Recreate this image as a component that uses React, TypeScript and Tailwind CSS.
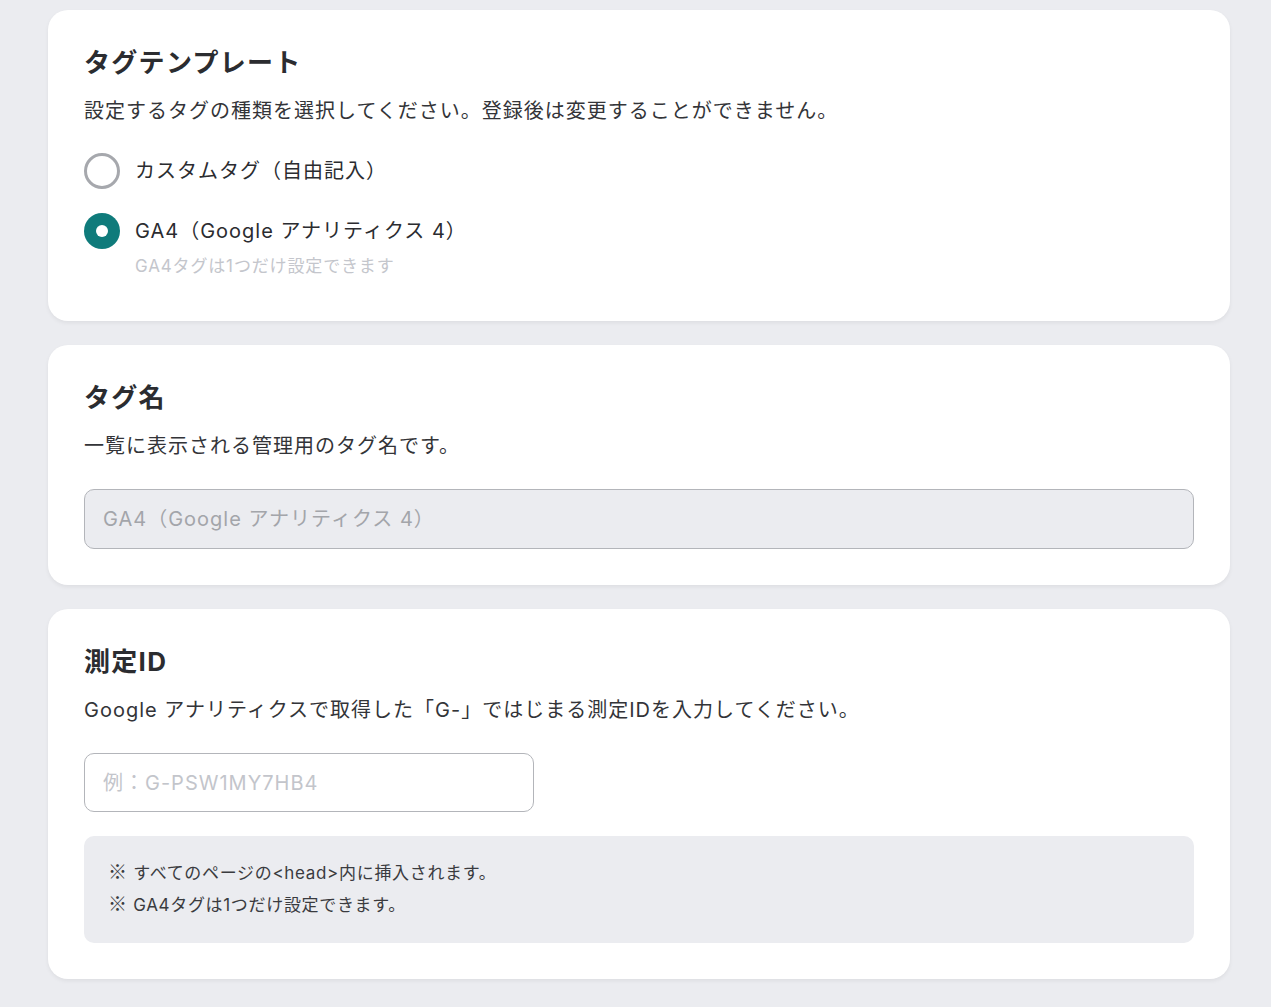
import React, { useState } from 'react';

const font = { fontFamily: 'Inter, "Noto Sans CJK JP", sans-serif' };
const cjk = { fontFamily: '"Noto Sans CJK JP", sans-serif' };

const Card: React.FC<{ className?: string; children: React.ReactNode }> = ({ className = '', children }) => (
  <section className={`bg-white rounded-[20px] px-9 pt-9 shadow-[0_2px_4px_rgba(0,0,0,0.06)] ${className}`}>
    {children}
  </section>
);

const Title: React.FC<{ children: React.ReactNode }> = ({ children }) => (
  <h2 className="text-[26px] leading-[34px] font-bold tracking-[0.05em] text-[#2b2c30]">{children}</h2>
);

const Desc: React.FC<{ children: React.ReactNode }> = ({ children }) => (
  <p className="mt-4 text-[20px] leading-[30px] tracking-[0.05em] text-[#333438]">{children}</p>
);

const Radio: React.FC<{ checked: boolean; onClick: () => void; label: string }> = ({ checked, onClick, label }) => (
  <button type="button" onClick={onClick} className="flex items-center gap-[15px] text-left">
    {checked ? (
      <span className="w-9 h-9 rounded-full bg-[#0f7b7b] flex items-center justify-center">
        <span className="w-3 h-3 rounded-full bg-white" />
      </span>
    ) : (
      <span className="w-9 h-9 rounded-full border-[3px] border-[#a6a8ad] bg-white" />
    )}
    <span className="text-[20px] leading-[30px] tracking-[0.05em] text-[#2b2c30]">{label}</span>
  </button>
);

export default function App() {
  const [template, setTemplate] = useState<'custom' | 'ga4'>('ga4');
  const [measureId, setMeasureId] = useState('');

  return (
    <div className="min-h-screen bg-[#ebecf0] pl-12 pr-[41px] pt-[10px] pb-7 flex flex-col gap-6" style={font}>
      {/* template */}
      <Card className="pb-[43px]">
        <Title>タグテンプレート</Title>
        <Desc>設定するタグの種類を選択してください。登録後は変更することができません。</Desc>
        <div className="mt-[27px] flex flex-col gap-6">
          <Radio checked={template === 'custom'} onClick={() => setTemplate('custom')} label="カスタムタグ（自由記入）" />
          <div>
            <Radio checked={template === 'ga4'} onClick={() => setTemplate('ga4')} label="GA4（Google アナリティクス 4）" />
            <p className="ml-[51px] mt-[5px] text-[17px] leading-[24px] tracking-[0.05em] text-[#c4c6cc]">GA4タグは1つだけ設定できます</p>
          </div>
        </div>
      </Card>

      {/* tag name */}
      <Card className="pb-9">
        <Title>タグ名</Title>
        <Desc>一覧に表示される管理用のタグ名です。</Desc>
        <input
          disabled
          value="GA4（Google アナリティクス 4）"
          className="mt-7 block w-full h-[60px] rounded-[10px] border border-[#b3b5ba] bg-[#ebecf0] px-[18px] pb-[4px] text-[20px] tracking-[0.05em] text-[#a3a5aa]"
          style={font}
          readOnly
        />
      </Card>

      {/* measurement id */}
      <Card className="pb-9">
        <Title>測定ID</Title>
        <Desc>Google アナリティクスで取得した「G-」ではじまる測定IDを入力してください。</Desc>
        <input
          value={measureId}
          onChange={(e) => setMeasureId(e.target.value)}
          placeholder="例：G-PSW1MY7HB4"
          className="mt-7 block w-[450px] h-[59px] rounded-[10px] border border-[#b3b5ba] bg-white px-[18px] text-[20px] tracking-[0.05em] text-[#2b2c30] placeholder:text-[#c3c5cb] outline-none"
          style={font}
        />
        <div className="mt-6 rounded-[10px] bg-[#ebecf0] px-6 pt-[21px] pb-[22px] text-[17px] leading-[32px] tracking-[0.04em] text-[#3a3b3f]">
          <p><span className="leading-none text-[19px] font-bold" style={cjk}>※</span> すべてのページの&lt;head&gt;内に挿入されます。</p>
          <p><span className="leading-none text-[19px] font-bold" style={cjk}>※</span> GA4タグは1つだけ設定できます。</p>
        </div>
      </Card>
    </div>
  );
}
